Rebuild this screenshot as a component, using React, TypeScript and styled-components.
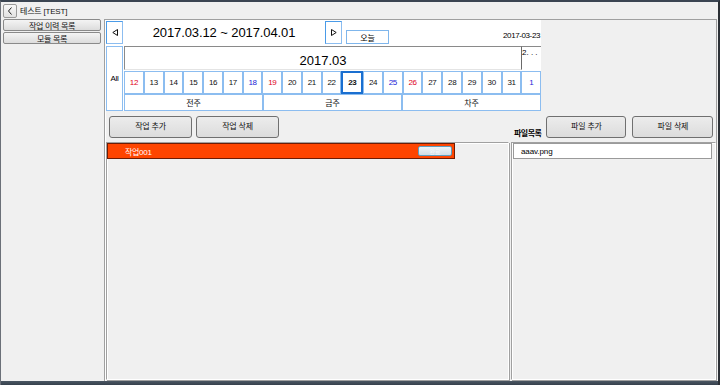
import React from "react";
import styled, { createGlobalStyle } from "styled-components";

const days = [12, 13, 14, 15, 16, 17, 18, 19, 20, 21, 22, 23, 24, 25, 26, 27, 28, 29, 30, 31, 1];
const weeks = ["전주", "금주", "차주"];

const GlobalStyle = createGlobalStyle`
  html, body {
    margin: 0;
    padding: 0;
    background: #f0f0f0;
  }
  * {
    box-sizing: border-box;
  }
  body {
    font-family: "Liberation Sans", "Noto Sans CJK KR", sans-serif;
    color: #000;
  }
`;

const App = () => {
  return (
    <>
      <GlobalStyle />
      <Window>
        <TitleBar>
          <BackButton>
            <svg width="6" height="8" viewBox="0 0 6 8">
              <polyline points="4.5,0.5 1.5,4 4.5,7.5" fill="none" stroke="#222" strokeWidth="1" />
            </svg>
          </BackButton>
          <TitleText>테스트 [TEST]</TitleText>
        </TitleBar>
        <Body>
          <Sidebar>
            <SideButton>작업 이력 목록</SideButton>
            <SideButton>모듈 목록</SideButton>
          </Sidebar>
          <Main>
            <CalendarRow>
              <Calendar>
                <CalTop>
                  <NavButton>
                    <svg width="6" height="7" viewBox="0 0 6 7">
                      <polygon points="5.5,0.5 0.8,3.5 5.5,6.5" fill="none" stroke="#111" strokeWidth="1" />
                    </svg>
                  </NavButton>
                  <RangeTitle>2017.03.12 ~ 2017.04.01</RangeTitle>
                  <NavButton>
                    <svg width="6" height="7" viewBox="0 0 6 7">
                      <polygon points="0.5,0.5 5.2,3.5 0.5,6.5" fill="none" stroke="#111" strokeWidth="1" />
                    </svg>
                  </NavButton>
                  <TodayButton>오늘</TodayButton>
                  <Spacer />
                  <TodayDate>2017-03-23</TodayDate>
                </CalTop>
                <CalBottom>
                  <AllCell>All</AllCell>
                  <CalGrid>
                    <MonthRow>
                      <MonthTitle>2017.03</MonthTitle>
                      <NextMonthCell>2. . .</NextMonthCell>
                    </MonthRow>
                    <DayRow>
                      {days.map((d, i) => (
                        <DayCell
                          key={d}
                          $tone={i % 7 === 0 ? "sun" : i % 7 === 6 ? "sat" : "day"}
                          $selected={d === 23}
                        >
                          {d}
                        </DayCell>
                      ))}
                    </DayRow>
                    <WeekRow>
                      {weeks.map((w) => (
                        <WeekCell key={w}>{w}</WeekCell>
                      ))}
                    </WeekRow>
                  </CalGrid>
                </CalBottom>
              </Calendar>
            </CalendarRow>
            <ActionRow>
              <TaskActions>
                <ActionButton $w={83}>작업 추가</ActionButton>
                <ActionButton $w={83}>작업 삭제</ActionButton>
              </TaskActions>
              <FileActions>
                <FileLabel>파일목록</FileLabel>
                <ActionButton $w={80}>파일 추가</ActionButton>
                <ActionButton $w={81}>파일 삭제</ActionButton>
              </FileActions>
            </ActionRow>
            <ListsRow>
              <TaskPanel>
                <TaskItem>
                  <TaskName>작업001</TaskName>
                  <TaskDone>완료</TaskDone>
                </TaskItem>
              </TaskPanel>
              <FilePanel>
                <FileItem>aaav.png</FileItem>
              </FilePanel>
            </ListsRow>
          </Main>
        </Body>
        <Taskbar />
      </Window>
    </>
  );
};

export default App;

const Window = styled.div`
  width: 720px;
  height: 385px;
  display: flex;
  flex-direction: column;
  background: #f0f0f0;
  border-top: 2px solid #3b4552;
  border-left: 1px solid #6b7078;
  border-right: 2px solid #2b2f35;
  overflow: hidden;
`;

const TitleBar = styled.div`
  height: 17px;
  display: flex;
  align-items: center;
  gap: 3px;
  padding-left: 2px;
`;

const BackButton = styled.div`
  width: 14px;
  height: 14px;
  display: flex;
  align-items: center;
  justify-content: center;
  border: 1px solid #9a9a9a;
  border-radius: 2px;
  background: linear-gradient(#f7f7f7, #e2e2e2);
`;

const TitleText = styled.span`
  font-size: 8px;
  letter-spacing: -0.2px;
  color: #111;
`;

const Body = styled.div`
  flex: 1;
  min-height: 0;
  display: flex;
`;

const Sidebar = styled.div`
  width: 103px;
  display: flex;
  flex-direction: column;
  gap: 1px;
  padding: 0 3px 0 2px;
`;

const SideButton = styled.div`
  height: 12px;
  display: flex;
  align-items: center;
  justify-content: center;
  border: 1px solid #8a8a8a;
  border-radius: 2px;
  background: linear-gradient(#f4f4f4, #dcdcdc);
  font-size: 8px;
  letter-spacing: -0.3px;
  color: #111;
`;

const Main = styled.div`
  width: 613px;
  margin-right: 1px;
  display: flex;
  flex-direction: column;
  border-top: 1px solid #a0a0a0;
  border-left: 1px solid #a0a0a0;
  border-right: 1px solid #a0a0a0;
  box-shadow: inset 1px 0 0 #ffffff;
`;

const CalendarRow = styled.div`
  display: flex;
  padding-left: 1px;
`;

const Calendar = styled.div`
  width: 435px;
  height: 91px;
  display: flex;
  flex-direction: column;
  gap: 1px;
  background: #ffffff;
`;

const CalTop = styled.div`
  height: 25px;
  display: flex;
  align-items: flex-start;
  padding-top: 1px;
`;

const NavButton = styled.div`
  width: 17px;
  height: 23px;
  display: flex;
  align-items: center;
  justify-content: center;
  border: 1px solid #8cbdf0;
  border-left-color: #4a9be8;
  border-top-color: #4a9be8;
  background: #ffffff;
`;

const RangeTitle = styled.div`
  width: 202px;
  height: 23px;
  line-height: 23px;
  text-align: center;
  font-size: 13px;
  letter-spacing: -0.1px;
`;

const TodayButton = styled.div`
  width: 43px;
  height: 14px;
  margin: 9px 0 0 4px;
  display: flex;
  align-items: center;
  justify-content: center;
  border: 1px solid #7fb6ec;
  background: #ffffff;
  font-size: 8px;
`;

const Spacer = styled.div`
  flex: 1;
`;

const TodayDate = styled.div`
  margin: 10px 1px 0 0;
  font-size: 8px;
  letter-spacing: -0.4px;
`;

const CalBottom = styled.div`
  height: 65px;
  display: flex;
  gap: 1px;
`;

const blueCell = `
  border: 1px solid #8cbdf0;
  background: #ffffff;
  display: flex;
  align-items: center;
  justify-content: center;
`;

const AllCell = styled.div`
  ${blueCell}
  width: 17px;
  font-size: 8px;
  letter-spacing: -0.3px;
`;

const CalGrid = styled.div`
  flex: 1;
  display: flex;
  flex-direction: column;
`;

const MonthRow = styled.div`
  height: 24px;
  display: flex;
  margin-bottom: 1px;
`;

const MonthTitle = styled.div`
  flex: 1;
  display: flex;
  align-items: center;
  justify-content: center;
  border-top: 1px solid #8a8a8a;
  border-left: 1px solid #8a8a8a;
  border-right: 1px solid #6a6a6a;
  border-bottom: 1px solid #e4e4e4;
  font-size: 13px;
  padding-top: 5px;
`;

const NextMonthCell = styled.div`
  width: 19px;
  border-top: 1px solid #8a8a8a;
  font-size: 8px;
  line-height: 9px;
  white-space: nowrap;
  overflow: hidden;
  padding-top: 1px;
`;

const DayRow = styled.div`
  height: 23px;
  display: flex;
`;

const toneColor = {
  sun: "#e0001a",
  sat: "#1b1bd6",
  day: "#111111",
};

const DayCell = styled.div<{ $tone: "sun" | "sat" | "day"; $selected?: boolean }>`
  ${blueCell}
  flex: 1;
  min-width: 0;
  font-size: 8px;
  letter-spacing: -0.4px;
  color: ${(p) => toneColor[p.$tone]};
  font-weight: ${(p) => (p.$selected ? 700 : 400)};
  border: ${(p) => (p.$selected ? "2px solid #1a6fd0" : "1px solid #8cbdf0")};
`;

const WeekRow = styled.div`
  height: 17px;
  display: flex;
`;

const WeekCell = styled.div`
  ${blueCell}
  flex: 1;
  font-size: 8px;
  color: #111;
`;

const ActionRow = styled.div`
  height: 31px;
  display: flex;
`;

const TaskActions = styled.div`
  width: 405px;
  display: flex;
  gap: 4px;
  padding: 5px 0 0 4px;
`;

const FileActions = styled.div`
  flex: 1;
  display: flex;
  gap: 6px;
  padding: 5px 0 0 4px;
`;

const FileLabel = styled.div`
  align-self: center;
  margin-top: 6px;
  margin-right: -1px;
  font-size: 8px;
  font-weight: 700;
  letter-spacing: -0.5px;
  white-space: nowrap;
`;

const ActionButton = styled.div<{ $w: number }>`
  width: ${(p) => p.$w}px;
  height: 22px;
  display: flex;
  align-items: center;
  justify-content: center;
  border: 1px solid #707070;
  border-radius: 3px;
  background: linear-gradient(#ececec, #dcdcdc);
  font-size: 8px;
  letter-spacing: -0.2px;
  color: #111;
  padding-bottom: 3px;
`;

const ListsRow = styled.div`
  flex: 1;
  min-height: 0;
  display: flex;
  gap: 2px;
  padding-left: 1px;
`;

const sunken = `
  border: 1px solid #a0a0a0;
  border-right-color: #ffffff;
  border-bottom-color: #ffffff;
  box-shadow: inset 1px 1px 0 #ffffff, 1px 1px 0 #a0a0a0;
`;

const TaskPanel = styled.div`
  ${sunken}
  width: 403px;
  height: 238px;
`;

const TaskItem = styled.div`
  width: 348px;
  height: 16px;
  display: flex;
  align-items: center;
  justify-content: space-between;
  background: #ff4500;
  border: 1px solid #6e1c04;
  padding: 0 2px 0 17px;
`;

const TaskName = styled.span`
  font-size: 8px;
  color: #ffffff;
  letter-spacing: -0.3px;
`;

const TaskDone = styled.div`
  width: 34px;
  height: 10px;
  display: flex;
  align-items: center;
  justify-content: center;
  border: 1px solid #5f9ec0;
  border-radius: 2px;
  background: linear-gradient(#eef4f8, #cfdde6);
  font-size: 6px;
  color: #f4f8fa;
`;

const FilePanel = styled.div`
  ${sunken}
  flex: 1;
  height: 238px;
  padding: 0 3px 0 1px;
`;

const FileItem = styled.div`
  height: 16px;
  display: flex;
  align-items: center;
  padding-left: 7px;
  background: #ffffff;
  border: 1px solid #9a9a9a;
  font-size: 8px;
  letter-spacing: -0.1px;
`;

const Taskbar = styled.div`
  height: 4px;
  background: linear-gradient(#4a5663, #36414d);
`;
